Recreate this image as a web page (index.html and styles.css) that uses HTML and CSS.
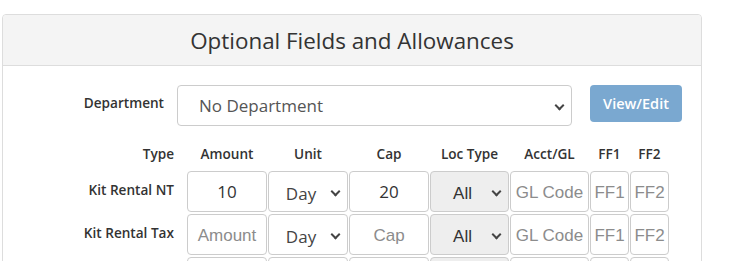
FILE: index.html
```html
<!DOCTYPE html>
<html lang="en">
<head>
    <meta charset="UTF-8">
    <meta name="viewport" content="width=device-width, initial-scale=1.0">
    <title>Optional Fields and Allowances</title>
    <link rel="stylesheet" href="styles.css">
</head>
<body>
    <div class="panel">
        <!-- Heading -->
        <div class="panel-heading">
            <h3 class="panel-title">Optional Fields and Allowances</h3>
        </div>

        <div class="panel-body">
            <!-- Department picker -->
            <div class="dept-row">
                <label class="dept-label" for="dept">Department</label>
                <div class="select-wrap dept-wrap">
                    <select id="dept" class="dept-select">
                        <option>No Department</option>
                    </select>
                </div>
                <button class="btn-view" disabled>View/Edit</button>
            </div>

            <!-- Allowances grid -->
            <div class="allowances">
                <div class="col-head type-head">Type</div>
                <div class="col-head">Amount</div>
                <div class="col-head">Unit</div>
                <div class="col-head">Cap</div>
                <div class="col-head">Loc Type</div>
                <div class="col-head">Acct/GL</div>
                <div class="col-head">FF1</div>
                <div class="col-head">FF2</div>

                <div class="row-label">Kit Rental NT</div>
                <input class="field" type="text" value="10" placeholder="Amount">
                <div class="select-wrap"><select class="field unit"><option>Day</option></select></div>
                <input class="field" type="text" value="20" placeholder="Cap">
                <div class="select-wrap"><select class="field loc" disabled><option>All</option></select></div>
                <input class="field" type="text" placeholder="GL Code">
                <input class="field small" type="text" placeholder="FF1">
                <input class="field small" type="text" placeholder="FF2">

                <div class="row-label">Kit Rental Tax</div>
                <input class="field" type="text" placeholder="Amount">
                <div class="select-wrap"><select class="field unit"><option>Day</option></select></div>
                <input class="field" type="text" placeholder="Cap">
                <div class="select-wrap"><select class="field loc" disabled><option>All</option></select></div>
                <input class="field" type="text" placeholder="GL Code">
                <input class="field small" type="text" placeholder="FF1">
                <input class="field small" type="text" placeholder="FF2">

                <div class="row-label"></div>
                <input class="field" type="text" placeholder="Amount">
                <div class="select-wrap"><select class="field unit"><option>Day</option></select></div>
                <input class="field" type="text" placeholder="Cap">
                <div class="select-wrap"><select class="field loc" disabled><option>All</option></select></div>
                <input class="field" type="text" placeholder="GL Code">
                <input class="field small" type="text" placeholder="FF1">
                <input class="field small" type="text" placeholder="FF2">
            </div>
        </div>
    </div>
</body>
</html>
```

FILE: styles.css
```css
body {
    margin: 0;
    padding: 0;
    background: #fff;
    color: #333;
    font-family: 'Open Sans', sans-serif;
    overflow: hidden;
}

/* Panel */
.panel {
    box-sizing: border-box;
    width: 700px;
    margin: 14px 0 0 2px;
    border: 1px solid #ddd;
    border-radius: 4px;
    background: #fff;
}

.panel-heading {
    height: 50px;
    background: #f4f4f4;
    border-bottom: 1px solid #ddd;
    border-radius: 4px 4px 0 0;
    display: flex;
    align-items: center;
    justify-content: center;
}

.panel-title {
    margin: 0;
    font-size: 22.4px;
    font-weight: 400;
    color: #333;
}

.panel-body {
    padding-top: 19px;
    padding-bottom: 20px;
}

/* Department row */
.dept-row {
    display: flex;
    align-items: flex-start;
}

.dept-label {
    width: 161px;
    text-align: right;
    padding-top: 9px;
    font-size: 13.6px;
    line-height: 18px;
    font-weight: 600;
}

.select-wrap {
    position: relative;
}

.select-wrap::after {
    content: "";
    position: absolute;
    top: 50%;
    right: 9px;
    width: 5px;
    height: 5px;
    margin-top: -4px;
    border-right: 2px solid #444;
    border-bottom: 2px solid #444;
    transform: rotate(45deg);
    pointer-events: none;
}

.dept-wrap {
    margin-left: 13px;
    width: 395px;
}

.dept-select {
    appearance: none;
    box-sizing: border-box;
    width: 100%;
    height: 41px;
    padding: 0 30px 0 21px;
    border: 1px solid #ccc;
    border-radius: 4px;
    background: #fff;
    font-family: 'Open Sans', sans-serif;
    font-size: 17px;
    color: #555;
}

.btn-view {
    margin-left: 18px;
    width: 92px;
    height: 37px;
    border: none;
    border-radius: 4px;
    background: #7aa8d0;
    color: #fff;
    font-family: 'Open Sans', sans-serif;
    font-size: 14.5px;
    font-weight: 600;
}

/* Allowances grid */
.allowances {
    display: grid;
    grid-template-columns: 183px 80px 80px 80px 79px 79px 39px 39px;
    grid-template-rows: 25px;
    grid-auto-rows: 41px;
    column-gap: 1px;
    row-gap: 2px;
    margin-top: 18px;
}

.col-head {
    align-self: start;
    line-height: 20px;
    text-align: center;
    font-size: 13.6px;
    font-weight: 600;
}

.type-head {
    text-align: right;
    padding-right: 12px;
}

.row-label {
    text-align: right;
    padding: 10px 12px 0 0;
    font-size: 13.6px;
    line-height: 18px;
    font-weight: 600;
}

.field {
    box-sizing: border-box;
    width: 100%;
    height: 41px;
    margin: 0;
    padding: 0 4px;
    border: 1px solid #ccc;
    border-radius: 4px;
    background: #fff;
    font-family: 'Open Sans', sans-serif;
    font-size: 17px;
    color: #333;
    text-align: center;
}

.field::placeholder {
    font-family: 'Liberation Sans', Arial, sans-serif;
    color: #8c8c8c;
}

.field.small {
    padding: 0 2px;
}

select.field {
    appearance: none;
    padding: 3px 20px 0 6px;
    text-align-last: center;
    color: #444;
}

select.loc {
    background: #eee;
    opacity: 1;
    font-family: 'Liberation Sans', Arial, sans-serif;
    color: #333;
}
```
